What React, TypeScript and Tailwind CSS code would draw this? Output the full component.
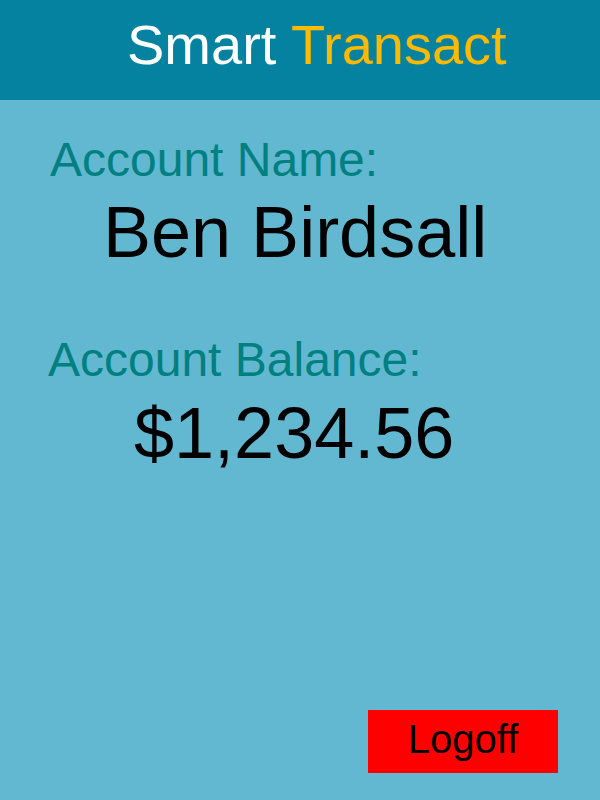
import React from "react";

const App: React.FC = () => {
  return (
    <div className="h-[800px] w-[600px] flex flex-col bg-[#62b8d0] font-['Liberation_Sans',Arial,sans-serif]">
      <header className="h-[100px] bg-[#05829f] pt-[17px] pl-[127px]">
        <h1 className="text-[56px] leading-none">
          <span className="text-white">Smart </span>
          <span className="text-[#ffb900]">Transact</span>
        </h1>
      </header>
      <main className="flex-1 flex flex-col pt-[36px]">
        <div className="pl-[50px] text-[48px] leading-none text-[#008080]">Account Name:</div>
        <div className="mt-[12px] pl-[103px] text-[72px] leading-none text-black">Ben Birdsall</div>
        <div className="mt-[68px] pl-[48px] text-[48px] leading-none text-[#008080]">Account Balance:</div>
        <div className="mt-[13px] pl-[134px] text-[72px] leading-none text-black">$1,234.56</div>
        <div className="mt-auto mb-[27px] flex justify-end pr-[42px]">
          <button className="h-[63px] w-[190px] bg-[#ff0000] flex items-center justify-center pb-[6px] text-[40px] leading-none text-black">
            Logoff
          </button>
        </div>
      </main>
    </div>
  );
};

export default App;
